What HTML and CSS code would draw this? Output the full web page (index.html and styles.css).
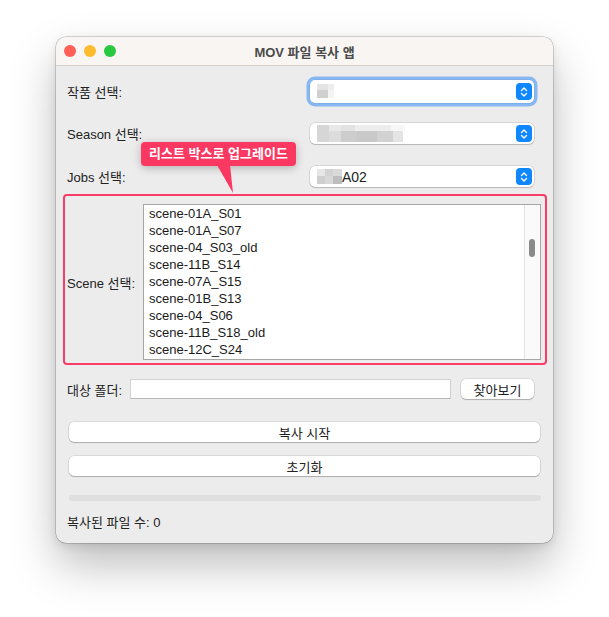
FILE: index.html
```html
<!DOCTYPE html>
<html lang="ko">
<head>
	<meta charset="UTF-8">
	<title>MOV 파일 복사 앱</title>
	<link rel="stylesheet" href="styles.css">
</head>
<body>
	<div class="window">
		<div class="titlebar">
			<div class="lights">
				<span class="light red"></span>
				<span class="light yellow"></span>
				<span class="light green"></span>
			</div>
			<h4>MOV 파일 복사 앱</h4>
		</div>
		<div class="form">
			<div class="row first">
				<span class="label">작품 선택:</span>
				<div class="combo focus">
					<svg class="blur" width="20" height="16" viewBox="0 0 20 16">
						<rect x="0" y="0" width="11" height="6" fill="#e4e4e4"/>
						<rect x="11" y="0" width="6" height="6" fill="#ededed"/>
						<rect x="0" y="6" width="11" height="8" fill="#d0d0d0"/>
						<rect x="11" y="6" width="6" height="8" fill="#f4f4f4"/>
					</svg>
					<span class="arrow"><svg width="10" height="12" viewBox="0 0 10 12"><path d="M2.5 4.5 L5 2 L7.5 4.5 M2.5 7.5 L5 10 L7.5 7.5" fill="none" stroke="#fff" stroke-width="1.4" stroke-linecap="round" stroke-linejoin="round"/></svg></span>
				</div>
			</div>
			<div class="row second">
				<span class="label">Season 선택:</span>
				<div class="combo">
					<svg class="blur" width="90" height="17" viewBox="0 0 90 17">
						<rect x="0" y="0" width="12" height="17" fill="#d6d6d6"/>
						<rect x="12" y="0" width="12" height="6" fill="#e8e8e8"/>
						<rect x="24" y="0" width="14" height="6" fill="#e2e2e2"/>
						<rect x="38" y="0" width="36" height="6" fill="#ededed"/>
						<rect x="74" y="0" width="14" height="6" fill="#f6f6f6"/>
						<rect x="12" y="6" width="12" height="11" fill="#dcdcdc"/>
						<rect x="24" y="6" width="16" height="11" fill="#cdcdcd"/>
						<rect x="40" y="6" width="20" height="11" fill="#c9c9c9"/>
						<rect x="60" y="6" width="16" height="11" fill="#d2d2d2"/>
						<rect x="76" y="6" width="10" height="11" fill="#e4e4e4"/>
					</svg>
					<span class="arrow"><svg width="10" height="12" viewBox="0 0 10 12"><path d="M2.5 4.5 L5 2 L7.5 4.5 M2.5 7.5 L5 10 L7.5 7.5" fill="none" stroke="#fff" stroke-width="1.4" stroke-linecap="round" stroke-linejoin="round"/></svg></span>
				</div>
			</div>
			<div class="row third">
				<span class="label">Jobs 선택:</span>
				<div class="combo">
					<svg class="blur" width="25" height="15" viewBox="0 0 25 15">
						<rect x="0" y="0" width="8" height="7" fill="#e6e6e6"/>
						<rect x="8" y="0" width="8" height="7" fill="#d3d3d3"/>
						<rect x="16" y="0" width="9" height="7" fill="#dadada"/>
						<rect x="0" y="7" width="8" height="8" fill="#cfcfcf"/>
						<rect x="8" y="7" width="8" height="8" fill="#d8d8d8"/>
						<rect x="16" y="7" width="9" height="8" fill="#bdbdbd"/>
					</svg>
					<span class="value">A02</span>
					<span class="arrow"><svg width="10" height="12" viewBox="0 0 10 12"><path d="M2.5 4.5 L5 2 L7.5 4.5 M2.5 7.5 L5 10 L7.5 7.5" fill="none" stroke="#fff" stroke-width="1.4" stroke-linecap="round" stroke-linejoin="round"/></svg></span>
				</div>
			</div>
			<div class="scene">
				<span class="label">Scene 선택:</span>
				<div class="listbox">
					<ul>
						<li>scene-01A_S01</li>
						<li>scene-01A_S07</li>
						<li>scene-04_S03_old</li>
						<li>scene-11B_S14</li>
						<li>scene-07A_S15</li>
						<li>scene-01B_S13</li>
						<li>scene-04_S06</li>
						<li>scene-11B_S18_old</li>
						<li>scene-12C_S24</li>
					</ul>
					<div class="scrollbar"><span class="thumb"></span></div>
				</div>
			</div>
			<div class="row folder">
				<span class="label">대상 폴더:</span>
				<div class="input"></div>
				<button class="btn browse">찾아보기</button>
			</div>
			<button class="btn wide start">복사 시작</button>
			<button class="btn wide reset">초기화</button>
			<div class="progress"></div>
			<div class="status">복사된 파일 수: 0</div>
		</div>
		<div class="callout">리스트 박스로 업그레이드</div>
	</div>
</body>
</html>
```

FILE: styles.css
```css
html{
	background-color: #fff;
}
body{
	margin: 0;
	padding: 37px 0 0 56px;
	min-height: 617px;
	box-sizing: border-box;
	background-color: #fff;
	font-family: "Liberation Sans", "Noto Sans CJK KR", sans-serif;
	font-size: 13px;
	color: #222;
}
.window{
	position: relative;
	width: 497px;
	height: 506px;
	border-radius: 10px;
	background-color: #ececec;
	box-shadow: 0 0 0 0.5px rgba(0, 0, 0, 0.3), 0 22px 45px rgba(0, 0, 0, 0.26), 0 3px 10px rgba(0, 0, 0, 0.1);
	overflow: hidden;
}
.titlebar{
	position: relative;
	height: 28px;
	background-color: #f8f5f2;
	border-bottom: 1px solid #d3d0cd;
	display: flex;
	align-items: center;
	justify-content: center;
}
.titlebar h4{
	margin: 0;
	font-size: 13px;
	font-weight: bold;
	color: #4b4b4b;
}
.lights{
	position: absolute;
	left: 8px;
	top: 8px;
	display: flex;
	gap: 8px;
}
.light{
	width: 12px;
	height: 12px;
	border-radius: 50%;
}
.red{ background-color: #fe5f57; }
.yellow{ background-color: #febc2e; }
.green{ background-color: #28c840; }

.form{
	padding: 0 12px 0 11px;
}
.label{
	white-space: nowrap;
	flex-shrink: 0;
}
.row{
	display: flex;
	align-items: center;
	justify-content: space-between;
}
.first{ margin-top: 14px; }
.second{ margin-top: 20px; }
.third{ margin-top: 22px; }
.combo{
	position: relative;
	width: 224px;
	height: 21px;
	margin-right: 7px;
	background-color: #fff;
	border-radius: 5px;
	box-shadow: 0 0 0 0.5px rgba(0, 0, 0, 0.18), 0 1px 1px rgba(0, 0, 0, 0.14);
	display: flex;
	align-items: center;
	padding-left: 7px;
	box-sizing: border-box;
}
.combo.focus{
	height: 23px;
	box-shadow: 0 0 0 3.5px rgba(70, 150, 245, 0.6), 0 0 0 0.5px rgba(0, 0, 0, 0.2);
}
.combo .value{
	font-size: 14px;
	color: #222;
}
.arrow{
	position: absolute;
	right: 2px;
	top: 50%;
	width: 16px;
	height: 17px;
	margin-top: -8.5px;
	border-radius: 4px;
	background-color: #0f87ff;
	display: flex;
	align-items: center;
	justify-content: center;
}
.scene{
	display: flex;
	align-items: center;
	justify-content: space-between;
	margin: 7px -6px 0 -4px;
	padding: 8px 4px 3px 2px;
	border: 2px solid #fb3c68;
	border-radius: 4px;
}
.listbox{
	position: relative;
	width: 398px;
	height: 156px;
	background-color: #fff;
	border: 1px solid #a6a6a6;
	box-sizing: border-box;
	display: flex;
}
.listbox ul{
	flex: 1;
	margin: 0;
	padding: 0;
	list-style: none;
}
.listbox li{
	height: 17px;
	line-height: 17px;
	padding-left: 5px;
	font-size: 13px;
	color: #1a1a1a;
}
.scrollbar{
	width: 15px;
	background-color: #fafafa;
	border-left: 1px solid #e4e4e4;
	position: relative;
}
.thumb{
	position: absolute;
	left: 4px;
	top: 34px;
	width: 6px;
	height: 18px;
	border-radius: 3px;
	background-color: #8a8a8a;
}
.folder{
	margin-top: 14px;
}
.input{
	flex: 1;
	height: 20px;
	margin-left: 8px;
	background-color: #fff;
	border: 1px solid #d2d2d2;
	border-bottom-color: #b8b8b8;
	box-sizing: border-box;
}
.btn{
	height: 20px;
	border: none;
	border-radius: 5px;
	background-color: #fff;
	box-shadow: 0 0 0 0.5px rgba(0, 0, 0, 0.16), 0 1px 1px rgba(0, 0, 0, 0.2);
	font-family: inherit;
	font-size: 13px;
	color: #222;
	padding: 0;
	outline: none;
}
.browse{
	width: 73px;
	flex-shrink: 0;
	margin: 0 7px 0 10px;
}
.wide{
	display: block;
	width: 471px;
	margin-left: 2px;
}
.start{ margin-top: 23px; }
.reset{ margin-top: 14px; }
.progress{
	height: 6px;
	margin: 19px 0 0 2px;
	width: 472px;
	border-radius: 3px;
	background-color: #dfdfdf;
}
.status{
	margin-top: 14px;
	line-height: 16px;
}
.callout{
	position: absolute;
	left: 85px;
	top: 105px;
	width: 155px;
	height: 24px;
	line-height: 24px;
	text-align: center;
	background-color: #fb3862;
	color: #fff;
	font-weight: bold;
	font-size: 13px;
	border-radius: 4px;
	box-shadow: 0 2px 8px rgba(0, 0, 0, 0.25);
}
.callout:after{
	content: '';
	position: absolute;
	left: 76px;
	top: 23px;
	width: 16px;
	height: 28px;
	background-color: #fb3862;
	clip-path: polygon(0 0, 13px 0, 16px 100%);
}
```
